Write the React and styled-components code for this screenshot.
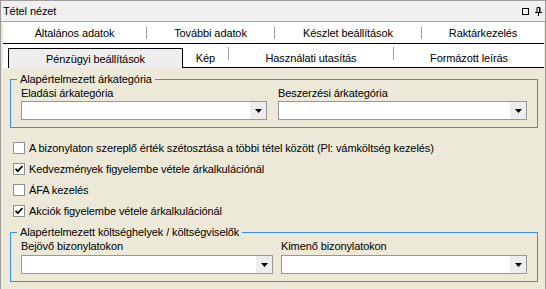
import React from 'react';
import styled, {createGlobalStyle} from 'styled-components';

const GlobalStyle = createGlobalStyle`
  html, body {
    margin: 0;
    padding: 0;
    background: #ece9d8;
  }
  body {
    font-family: "Liberation Sans", Arial, sans-serif;
    font-size: 11px;
    letter-spacing: -0.1px;
    color: #000;
  }
`

const Panel = styled.div`
  width: 544px;
  height: 288px;
  border: 1px solid #9c9c9c;
  border-bottom: none;
  background: #ece9d8;
  overflow: hidden;
`

const TitleBar = styled.div`
  height: 20px;
  display: flex;
  align-items: center;
  justify-content: space-between;
  padding: 0 3px 0 2px;
  background: #f0f0f0;
  border-bottom: 1px solid #a6a6a6;
`

const TitleText = styled.span`
  font-size: 11px;
`

const TitleIcons = styled.div`
  display: flex;
  align-items: center;
  gap: 6px;
`

const TabArea = styled.div`
  margin: 0 1px 0 2px;
  background: #fff;
`

const TabRow = styled.div`
  display: flex;
  align-items: ${p => p.$top ? 'center' : 'flex-end'};
  height: ${p => p.$top ? '21px' : '24px'};
  border-bottom: ${p => p.$top ? '1px solid #000' : 'none'};
  padding-left: ${p => p.$top ? '0' : '5px'};
`

const Tab = styled.div`
  box-sizing: border-box;
  display: flex;
  align-items: center;
  justify-content: center;
  flex: ${p => p.$w ? `0 0 ${p.$w}px` : '1 1 auto'};
  height: ${p => p.$top ? '21px' : '20px'};
  background: ${p => p.$active ? '#eeeeee' : 'transparent'};
  border: ${p => p.$active ? '1px solid #000' : 'none'};
  border-bottom: ${p => p.$active || p.$top ? 'none' : '1px solid #000'};
  white-space: nowrap;
`

const TabSep = styled.div`
  flex: 0 0 1px;
  align-self: ${p => p.$top ? 'center' : 'stretch'};
  height: ${p => p.$top ? '12px' : 'auto'};
  display: flex;
  flex-direction: column;
  border-bottom: ${p => p.$top ? 'none' : '1px solid #000'};
  &::before {
    content: '';
    display: block;
    width: 1px;
    height: 13px;
    margin-top: ${p => p.$top ? '0' : '3px'};
    background: #a0a0a0;
  }
`

const Group = styled.fieldset`
  margin: ${p => p.$mt}px 7px 0 9px;
  padding: 0 10px 7px 10px;
  border: 1px solid #3a8ee6;
  min-width: 0;
`

const Legend = styled.legend`
  margin-left: -4px;
  padding: 0 3px;
  line-height: 13px;
`

const FieldGrid = styled.div`
  display: grid;
  grid-template-columns: ${p => p.$left}px 1fr;
  column-gap: ${p => p.$gap}px;
`

const Field = styled.div`
  display: flex;
  flex-direction: column;
`

const Label = styled.label`
  line-height: 13px;
  margin: 1px 0 ${p => p.$mb}px;
`

const Combo = styled.div`
  box-sizing: border-box;
  height: 19px;
  display: flex;
  justify-content: flex-end;
  background: #fff;
  border: 1px solid #979797;
  padding: 0;
`

const ComboButton = styled.div`
  width: 16px;
  background: #ededed;
  display: flex;
  align-items: center;
  justify-content: center;
`

const CheckList = styled.div`
  margin: 9px 0 0 12px;
  display: flex;
  flex-direction: column;
`

const CheckRow = styled.label`
  height: 21px;
  display: flex;
  align-items: center;
  gap: 4px;
  white-space: nowrap;
`

const Box = styled.span`
  box-sizing: border-box;
  width: 12px;
  height: 12px;
  border: 1px solid #8f8f8f;
  background: #fff;
  display: flex;
  align-items: center;
  justify-content: center;
`

function Arrow() {
  return (
    <svg width="7" height="4" viewBox="0 0 7 4">
      <path d="M0 0H7L3.5 4Z" fill="#000"/>
    </svg>
  )
}

function Dropdown() {
  return (
    <Combo>
      <ComboButton><Arrow/></ComboButton>
    </Combo>
  )
}

function Checkbox({checked, children}) {
  return (
    <CheckRow>
      <Box>
        {checked && (
          <svg width="8" height="8" viewBox="0 0 8 8">
            <path d="M0.5 3.8L2.8 6.2L7.5 1" fill="none" stroke="#000" strokeWidth="1.8"/>
          </svg>
        )}
      </Box>
      {children}
    </CheckRow>
  )
}

export default function App() {
  return (
    <Panel>
      <GlobalStyle/>
      <TitleBar>
        <TitleText>Tétel nézet</TitleText>
        <TitleIcons>
          <svg width="7" height="7" viewBox="0 0 7 7">
            <rect x="0.5" y="0.5" width="6" height="6" fill="none" stroke="#000"/>
          </svg>
          <svg width="7" height="9" viewBox="0 0 7 9">
            <path d="M2 0.5H5V5M2 0.5V5M0 5.5H7M3.5 6V9" fill="none" stroke="#000"/>
            <rect x="4" y="0.5" width="1" height="4.5" fill="#000"/>
          </svg>
        </TitleIcons>
      </TitleBar>

      <TabArea>
        <TabRow $top>
          <Tab $top $w={143}>Általános adatok</Tab>
          <TabSep $top/>
          <Tab $top $w={127}>További adatok</Tab>
          <TabSep $top/>
          <Tab $top $w={146}>Készlet beállítások</Tab>
          <TabSep $top/>
          <Tab $top>Raktárkezelés</Tab>
        </TabRow>
        <TabRow>
          <Tab $active $w={175}>Pénzügyi beállítások</Tab>
          <Tab $w={45}>Kép</Tab>
          <TabSep/>
          <Tab $w={164}>Használati utasítás</Tab>
          <TabSep/>
          <Tab>Formázott leírás</Tab>
        </TabRow>
      </TabArea>

      <Group $mt={5}>
        <Legend>Alapértelmezett árkategória</Legend>
        <FieldGrid $left={246} $gap={11}>
          <Field>
            <Label $mb={1}>Eladási árkategória</Label>
            <Dropdown/>
          </Field>
          <Field>
            <Label $mb={1}>Beszerzési árkategória</Label>
            <Dropdown/>
          </Field>
        </FieldGrid>
      </Group>

      <CheckList>
        <Checkbox>A bizonylaton szereplő érték szétosztása a többi tétel között (Pl: vámköltség kezelés)</Checkbox>
        <Checkbox checked>Kedvezmények figyelembe vétele árkalkulációnál</Checkbox>
        <Checkbox>ÁFA kezelés</Checkbox>
        <Checkbox checked>Akciók figyelembe vétele árkalkulációnál</Checkbox>
      </CheckList>

      <Group $mt={5}>
        <Legend>Alapértelmezett költséghelyek / költségviselők</Legend>
        <FieldGrid $left={252} $gap={8}>
          <Field>
            <Label $mb={2}>Bejövő bizonylatokon</Label>
            <Dropdown/>
          </Field>
          <Field>
            <Label $mb={2}>Kimenő bizonylatokon</Label>
            <Dropdown/>
          </Field>
        </FieldGrid>
      </Group>
    </Panel>
  )
}
